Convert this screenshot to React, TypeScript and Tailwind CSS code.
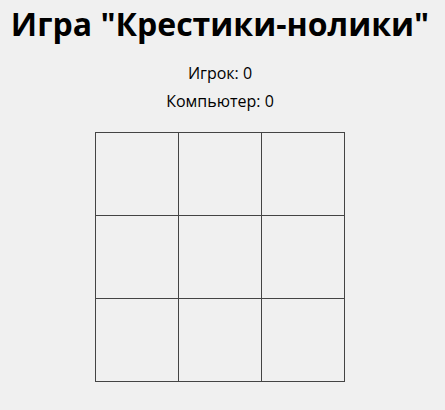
export default function App() {
  const cells = Array.from({ length: 9 });
  return (
    <div className="min-h-[410px] bg-[#f0f0f0] flex flex-col items-center pr-[5px] text-black" style={{ fontFamily: '"Open Sans", "Noto Sans", sans-serif' }}>
      <h1 className="text-[32px] font-bold leading-[44px] mt-[2px]">Игра "Крестики-нолики"</h1>
      <p className="text-[16px] leading-[22px] mt-[16px]">Игрок: 0</p>
      <p className="text-[16px] leading-[22px] mt-[6px]">Компьютер: 0</p>
      <div className="grid grid-cols-[repeat(3,83px)] grid-rows-[repeat(3,83px)] border-l border-t border-[#444] mt-[20px]">
        {cells.map((_, i) => (
          <div key={i} className="border-r border-b border-[#444]" />
        ))}
      </div>
    </div>
  );
}
